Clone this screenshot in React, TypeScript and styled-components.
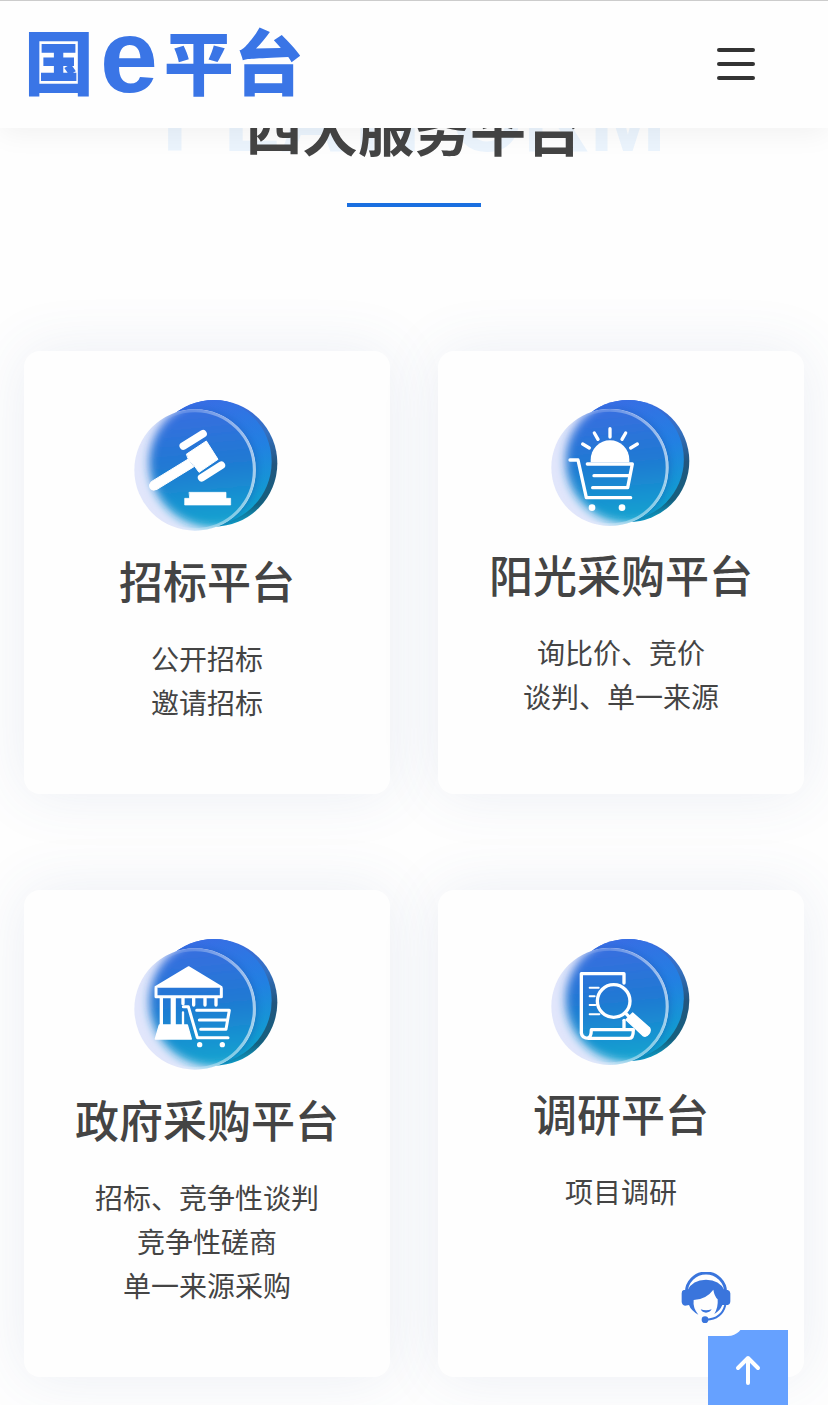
import React, { ReactNode } from 'react';
import styled, { createGlobalStyle } from 'styled-components';

const GlobalStyle = createGlobalStyle`
  *, *::before, *::after { box-sizing: border-box; }
  body {
    margin: 0;
    background: #fefefe;
    color: #444;
    font-family: "Noto Sans CJK SC", "Liberation Sans", sans-serif;
  }
  h1, h2, p, ul { margin: 0; padding: 0; }
`;

const Header = styled.header`
  position: fixed;
  inset: 0 0 auto 0;
  z-index: 2;
  height: 128px;
  padding: 0 64px 2px 24px;
  display: flex;
  align-items: center;
  justify-content: space-between;
  background: #fefefe;
  border-top: 1px solid #ccc;
  box-shadow: 0 4px 28px rgba(0, 0, 0, 0.06);
`;

const Logo = styled.a`
  display: flex;
  align-items: center;
  gap: 6px;
  color: #3a75e6;
  font-size: 70px;
  font-weight: 900;
  line-height: 104px;
  text-decoration: none;
`;

const LogoHan = styled.span`
  padding-bottom: 8px;
`;

const LogoLatin = styled.span`
  font-family: "Liberation Sans", sans-serif;
  font-size: 104px;
  font-weight: 700;
  padding-bottom: 16px;
`;

const MenuButton = styled.button`
  width: 56px;
  height: 56px;
  padding: 0;
  border: 0;
  background: none;
  display: flex;
  flex-direction: column;
  align-items: center;
  justify-content: center;
  gap: 10px;
`;

const MenuBar = styled.span`
  width: 38px;
  height: 4px;
  border-radius: 2px;
  background: #333;
`;

const Main = styled.main`
  padding: 84px 24px 28px;
`;

const Heading = styled.div`
  display: grid;
  justify-items: center;
  margin-bottom: 144px;
`;

const Watermark = styled.span`
  grid-area: 1 / 1;
  color: #ebf4fd;
  font-family: "Liberation Sans", sans-serif;
  font-size: 92px;
  font-weight: 700;
  line-height: 70px;
`;

const Title = styled.h1`
  grid-area: 1 / 1;
  font-size: 56px;
  font-weight: 700;
  line-height: 86px;
`;

const Rule = styled.span`
  width: 134px;
  height: 4px;
  margin-top: 33px;
  background: #1a6fe0;
`;

const Grid = styled.div`
  display: grid;
  grid-template-columns: 1fr 1fr;
  gap: 96px 48px;
`;

const Card = styled.section`
  display: flex;
  flex-direction: column;
  align-items: center;
  padding: 48px 16px 70px;
  border-radius: 16px;
  background: #fefefe;
  box-shadow: 0 0 60px rgba(70, 100, 160, 0.1);
  text-align: center;
`;

const CardTitle = styled.h2`
  margin: 10px 0 23px;
  font-size: 44px;
  font-weight: 500;
  line-height: 66px;
`;

const CardLine = styled.p`
  font-size: 28px;
  line-height: 44px;
`;

const ServiceButton = styled.button`
  position: fixed;
  right: 84px;
  bottom: 69px;
  z-index: 4;
  width: 76px;
  height: 76px;
  padding: 0;
  border: 0;
  border-radius: 16px;
  background: #fefefe;
  display: flex;
  align-items: center;
  justify-content: center;
`;

const TopButton = styled.button`
  position: fixed;
  right: 40px;
  bottom: -5px;
  z-index: 3;
  width: 80px;
  height: 80px;
  padding: 0;
  border: 0;
  background: #66a1ff;
  display: flex;
  align-items: center;
  justify-content: center;
`;

function Badge({ id, small, children }: { id: string; small?: boolean; children: ReactNode }) {
  const k = small ? 0.965 : 1;
  return (
    <svg
      width={small ? 140 : 146}
      height={small ? 132 : 138}
      viewBox={small ? '33 42 420 396' : '42 42 438 414'}
      aria-hidden="true"
    >
      <defs>
        <linearGradient id={`${id}-back`} x1="0.3" y1="0" x2="0.6" y2="1">
          <stop offset="0" stopColor="#3a6be4" />
          <stop offset="0.5" stopColor="#2280e2" />
          <stop offset="1" stopColor="#0da4cc" />
        </linearGradient>
        <linearGradient id={`${id}-rim`} x1="0.5" y1="0" x2="0.6" y2="1">
          <stop offset="0" stopColor="#3a6be4" />
          <stop offset="0.3" stopColor="#3370c0" />
          <stop offset="0.55" stopColor="#23567e" />
          <stop offset="0.85" stopColor="#14607f" />
          <stop offset="1" stopColor="#0da4cc" />
        </linearGradient>
        <linearGradient id={`${id}-glass`} x1="0.4" y1="0" x2="0.5" y2="1">
          <stop offset="0" stopColor="#3c6ce2" />
          <stop offset="0.5" stopColor="#2079d3" />
          <stop offset="1" stopColor="#10a5cf" />
        </linearGradient>
        <linearGradient id={`${id}-ring`} x1="0" y1="0" x2="1" y2="0">
          <stop offset="0.25" stopColor="#fff" stopOpacity="0" />
          <stop offset="0.6" stopColor="#fff" stopOpacity="0.3" />
          <stop offset="1" stopColor="#fff" stopOpacity="0.6" />
        </linearGradient>
        <filter id={`${id}-soft`} x="-20%" y="-20%" width="140%" height="140%">
          <feGaussianBlur stdDeviation="15" />
        </filter>
        <filter id={`${id}-shade`} x="-20%" y="-20%" width="140%" height="140%">
          <feGaussianBlur stdDeviation="10" />
        </filter>
        <clipPath id={`${id}-clip`}>
          <circle cx="225" cy="255" r="182" />
        </clipPath>
        <clipPath id={`${id}-body`}>
          <circle cx="282" cy="235" r="190" />
        </clipPath>
      </defs>
      <g transform={small ? `translate(${33 - 42 * k} ${42 - 42 * k}) scale(${k})` : undefined}>
        <circle cx="282" cy="235" r="190" fill={`url(#${id}-rim)`} />
        <g clipPath={`url(#${id}-body)`}>
          <circle cx="265" cy="230" r="190" fill={`url(#${id}-back)`} />
          <circle cx="232" cy="257" r="182" fill="#1450a8" opacity="0.35" filter={`url(#${id}-shade)`} />
        </g>
        <circle cx="225" cy="255" r="182" fill="#e1e6fb" />
        <g clipPath={`url(#${id}-clip)`}>
          <circle cx="282" cy="234" r="194" fill={`url(#${id}-glass)`} filter={`url(#${id}-soft)`} />
        </g>
        <circle cx="225" cy="255" r="178" fill="none" stroke={`url(#${id}-ring)`} strokeWidth="9" />
      </g>
      {children}
    </svg>
  );
}

const Gavel = () => (
  <g fill="#fff" stroke="#fff" strokeLinecap="round" strokeLinejoin="round">
    <path d="M190 183 L249 146" strokeWidth="23" fill="none" />
    <path d="M245 278 L304 241" strokeWidth="23" fill="none" />
    <path d="M200 207 L259 168 L294 223 L237 262 L222 241 L205 222 Z" strokeWidth="3" />
    <path d="M205 222 L94 290 Q84 300 91 311 Q99 319 111 313 L222 245 Z" strokeWidth="3" />
    <path d="M208 322 H318 V340 H332 V360 H194 V340 H208 Z" strokeWidth="2" />
  </g>
);

const SunCart = () => (
  <g fill="none" stroke="#fff" strokeWidth="10" strokeLinecap="round" strokeLinejoin="round">
    <path d="M152 232 V224 A58 58 0 0 1 268 224 V232 Z" fill="#fff" stroke="none" />
    <path d="M210 131 V156 M163 144 L174 163 M257 144 L246 163 M128 177 L148 189 M292 177 L272 189" />
    <path d="M90 225 H114 L139 338 H272" />
    <path d="M142 237 H277 L263 308 H158 M162 272 H266" />
    <circle cx="156" cy="368" r="10" fill="#fff" stroke="none" />
    <circle cx="246" cy="368" r="10" fill="#fff" stroke="none" />
  </g>
);

const BankCart = () => (
  <g transform="translate(0 3)" fill="none" stroke="#fff" strokeWidth="9" strokeLinecap="round" strokeLinejoin="round">
    <path d="M206 126 L106 186 H305 Z" fill="#fff" strokeWidth="5" />
    <path d="M108 190 V215 H304 V190" />
    <path d="M124 218 V300 M157 218 V300 M189 218 V236 M221 218 V240 M255 218 V240 M288 218 V240" strokeWidth="10" />
    <path d="M164 218 V300 M189 262 V300" strokeWidth="7" />
    <path d="M118 300 H202 L214 342 H106 Z" fill="#fff" strokeWidth="4" />
    <path d="M190 245 H205 L232 338 H324" />
    <path d="M230 256 H328 L318 313 H242 M238 285 H320" />
    <circle cx="239" cy="359" r="8" fill="#fff" stroke="none" />
    <circle cx="307" cy="359" r="8" fill="#fff" stroke="none" />
  </g>
);

const Research = () => (
  <g transform="translate(0 3)" fill="none" stroke="#fff" strokeWidth="10" strokeLinecap="round" strokeLinejoin="round">
    <path d="M252 174 V146 H124 V324 Q126 340 146 340 H268 Q280 340 280 314 H154 Q154 340 140 340" />
    <path d="M252 286 V312" />
    <path d="M149 188 H176 M149 214 H164 M149 240 H166 M149 268 H178" strokeWidth="6" />
    <circle cx="221" cy="228" r="49" />
    <path d="M258 266 L276 284" />
    <path d="M258 284 L278 264 L329 309 Q333 317 327 326 Q318 338 308 331 Z" fill="#fff" strokeWidth="4" />
  </g>
);

const platforms: { id: string; title: string; lines: string[]; small?: boolean; icon: ReactNode }[] = [
  { id: 'bid', title: '招标平台', lines: ['公开招标', '邀请招标'], icon: <Gavel /> },
  { id: 'sun', title: '阳光采购平台', lines: ['询比价、竞价', '谈判、单一来源'], small: true, icon: <SunCart /> },
  { id: 'gov', title: '政府采购平台', lines: ['招标、竞争性谈判', '竞争性磋商', '单一来源采购'], icon: <BankCart /> },
  { id: 'survey', title: '调研平台', lines: ['项目调研'], small: true, icon: <Research /> },
];

export default function App() {
  return (
    <>
      <GlobalStyle />
      <Header>
        <Logo href="#">
          <LogoHan>国</LogoHan>
          <LogoLatin>e</LogoLatin>
          <LogoHan>平台</LogoHan>
        </Logo>
        <MenuButton aria-label="菜单">
          <MenuBar />
          <MenuBar />
          <MenuBar />
        </MenuButton>
      </Header>
      <Main>
        <Heading>
          <Watermark aria-hidden="true">PLATFORM</Watermark>
          <Title>四大服务平台</Title>
          <Rule />
        </Heading>
        <Grid>
          {platforms.map((p) => (
            <Card key={p.id}>
              <Badge id={p.id} small={p.small}>{p.icon}</Badge>
              <CardTitle>{p.title}</CardTitle>
              {p.lines.map((line) => (
                <CardLine key={line}>{line}</CardLine>
              ))}
            </Card>
          ))}
        </Grid>
      </Main>
      <ServiceButton aria-label="在线客服">
        <svg width="50" height="52" viewBox="64 66 150 156" aria-hidden="true">
          <path d="M80 128 A59 59 0 0 1 198 128" fill="none" stroke="#3a75dc" strokeWidth="9" />
          <path d="M84 120 H72 Q66 121 66 130 V156 Q67 165 76 167 L88 165 Q94 182 116 194 Q99 174 102 150 Q140 148 161 119 Q164 138 174 148 Q176 172 164 192 Q181 182 188 165 H204 Q212 163 212 154 V130 Q211 121 204 120 H194 Q180 90 139 89 Q98 90 84 120 Z" fill="#3a75dc" />
          <path d="M123 178 Q139 184 156 178 Q150 188 139 188 Q128 188 123 178 Z" fill="#3a75dc" />
          <path d="M197 165 Q186 207 140 209" fill="none" stroke="#3a75dc" strokeWidth="6" />
          <circle cx="136" cy="209" r="10" fill="#3a75dc" />
        </svg>
      </ServiceButton>
      <TopButton aria-label="返回顶部">
        <svg width="28" height="32" viewBox="0 0 28 32" fill="none" stroke="#fff" strokeWidth="4" strokeLinecap="round" strokeLinejoin="round" aria-hidden="true">
          <path d="M14 29 V4 M4 14 L14 4 L24 14" />
        </svg>
      </TopButton>
    </>
  );
}
